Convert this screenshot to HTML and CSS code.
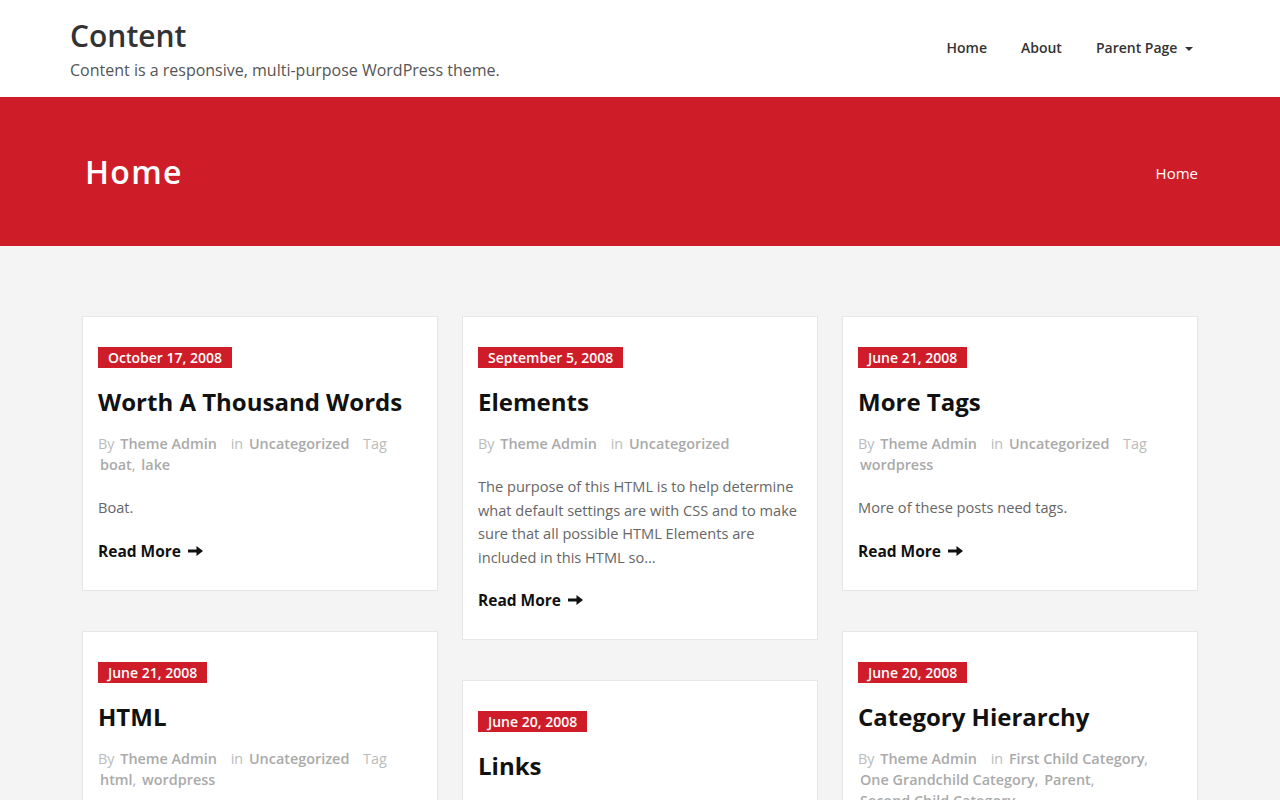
FILE: index.html
```html
<!DOCTYPE html>
<html lang="en">
<head>
  <meta charset="UTF-8">
  <meta name="viewport" content="width=device-width, initial-scale=1.0">
  <title>Content</title>
  <link rel="stylesheet" href="styles.css">
</head>
<body>

<header class="site-header">
  <div class="container header-inner">
    <div class="branding">
      <h1 class="site-title"><a href="#">Content</a></h1>
      <p class="site-description">Content is a responsive, multi-purpose WordPress theme.</p>
    </div>
    <nav class="main-nav">
      <a href="#">Home</a>
      <a href="#">About</a>
      <a href="#" class="has-children">Parent Page <span class="caret"></span></a>
    </nav>
  </div>
</header>

<section class="page-banner">
  <div class="container banner-inner">
    <h2 class="page-title">Home</h2>
    <div class="breadcrumb">Home</div>
  </div>
</section>

<main class="content-area">
  <div class="container posts">

    <div class="post-column">
      <article class="post-card">
        <span class="post-date">October 17, 2008</span>
        <h3 class="post-title">Worth A Thousand Words</h3>
        <div class="post-meta">
          <span class="label">By</span> <a href="#">Theme Admin</a>
          <span class="label in">in</span> <a href="#">Uncategorized</a>
          <span class="label in">Tag</span> <a href="#">boat</a>, <a href="#">lake</a>
        </div>
        <p class="post-excerpt">Boat.</p>
        <a href="#" class="read-more">Read More <svg width="15" height="10" viewBox="0 0 15 10"><path d="M0 3.4h8.5V0L15 5l-6.5 5V6.6H0z" fill="#111"/></svg></a>
      </article>
      <article class="post-card">
        <span class="post-date">June 21, 2008</span>
        <h3 class="post-title">HTML</h3>
        <div class="post-meta">
          <span class="label">By</span> <a href="#">Theme Admin</a>
          <span class="label in">in</span> <a href="#">Uncategorized</a>
          <span class="label in">Tag</span> <a href="#">html</a>, <a href="#">wordpress</a>
        </div>
        <p class="post-excerpt">Just some HTML.</p>
        <a href="#" class="read-more">Read More <svg width="15" height="10" viewBox="0 0 15 10"><path d="M0 3.4h8.5V0L15 5l-6.5 5V6.6H0z" fill="#111"/></svg></a>
      </article>
    </div>

    <div class="post-column">
      <article class="post-card">
        <span class="post-date">September 5, 2008</span>
        <h3 class="post-title">Elements</h3>
        <div class="post-meta">
          <span class="label">By</span> <a href="#">Theme Admin</a>
          <span class="label in">in</span> <a href="#">Uncategorized</a>
        </div>
        <p class="post-excerpt">The purpose of this HTML is to help determine what default settings are with CSS and to make sure that all possible HTML Elements are included in this HTML so…</p>
        <a href="#" class="read-more">Read More <svg width="15" height="10" viewBox="0 0 15 10"><path d="M0 3.4h8.5V0L15 5l-6.5 5V6.6H0z" fill="#111"/></svg></a>
      </article>
      <article class="post-card">
        <span class="post-date">June 20, 2008</span>
        <h3 class="post-title">Links</h3>
        <div class="post-meta">
          <span class="label">By</span> <a href="#">Theme Admin</a>
          <span class="label in">in</span> <a href="#">Uncategorized</a>
        </div>
        <p class="post-excerpt">Just a bunch of links.</p>
        <a href="#" class="read-more">Read More <svg width="15" height="10" viewBox="0 0 15 10"><path d="M0 3.4h8.5V0L15 5l-6.5 5V6.6H0z" fill="#111"/></svg></a>
      </article>
    </div>

    <div class="post-column">
      <article class="post-card">
        <span class="post-date">June 21, 2008</span>
        <h3 class="post-title">More Tags</h3>
        <div class="post-meta">
          <span class="label">By</span> <a href="#">Theme Admin</a>
          <span class="label in">in</span> <a href="#">Uncategorized</a>
          <span class="label in">Tag</span> <a href="#">wordpress</a>
        </div>
        <p class="post-excerpt">More of these posts need tags.</p>
        <a href="#" class="read-more">Read More <svg width="15" height="10" viewBox="0 0 15 10"><path d="M0 3.4h8.5V0L15 5l-6.5 5V6.6H0z" fill="#111"/></svg></a>
      </article>
      <article class="post-card">
        <span class="post-date">June 20, 2008</span>
        <h3 class="post-title">Category Hierarchy</h3>
        <div class="post-meta">
          <span class="label">By</span> <a href="#">Theme Admin</a>
          <span class="label in">in</span> <a href="#">First Child Category</a>, <a href="#">One Grandchild Category</a>, <a href="#">Parent</a>, <a href="#">Second Child Category</a>
        </div>
        <p class="post-excerpt">This post is in several categories.</p>
        <a href="#" class="read-more">Read More <svg width="15" height="10" viewBox="0 0 15 10"><path d="M0 3.4h8.5V0L15 5l-6.5 5V6.6H0z" fill="#111"/></svg></a>
      </article>
    </div>

  </div>
</main>

</body>
</html>
```

FILE: styles.css
```css
body {
  margin: 0;
  font-family: "Open Sans", "Liberation Sans", sans-serif;
  background: #f4f4f4;
  color: #666;
}
a {
  text-decoration: none;
  color: inherit;
}
.container {
  width: 1140px;
  margin: 0 auto;
}

/* header */
.site-header {
  background: #fff;
  height: 97px;
}
.header-inner {
  display: flex;
  justify-content: space-between;
  align-items: center;
  height: 100%;
}
.site-title {
  margin: 0;
  font-size: 30px;
  font-weight: 600;
  line-height: 40px;
  color: #333;
}
.site-description {
  margin: 3px 0 0;
  font-size: 16px;
  line-height: 22px;
  color: #555;
}
.main-nav {
  display: flex;
  margin-bottom: 2px;
}
.main-nav a {
  padding: 0 17px;
  font-size: 14px;
  font-weight: 600;
  color: #333;
  line-height: 20px;
}
.caret {
  display: inline-block;
  width: 0;
  height: 0;
  margin-left: 4px;
  vertical-align: middle;
  border-top: 4px solid #333;
  border-left: 4px solid transparent;
  border-right: 4px solid transparent;
}

/* banner */
.page-banner {
  background: #ce1d28;
  height: 149px;
}
.banner-inner {
  display: flex;
  justify-content: space-between;
  align-items: center;
  height: 100%;
  padding: 2px 12px 0 15px;
  box-sizing: border-box;
}
.page-title {
  margin: 0 0 2px;
  font-size: 32px;
  font-weight: 600;
  letter-spacing: 1.3px;
  color: #fff;
}
.breadcrumb {
  font-size: 15px;
  color: #fff;
}

/* posts */
.content-area {
  padding: 70px 0 40px;
}
.posts {
  display: flex;
  gap: 24px;
  padding: 0 12px;
  box-sizing: border-box;
  align-items: flex-start;
}
.post-column {
  flex: 1;
  display: flex;
  flex-direction: column;
  gap: 40px;
}
.post-card {
  background: #fff;
  border: 1px solid #e6e6e6;
  padding: 29px 15px 28px;
}
.post-date {
  display: inline-block;
  background: #ce1d28;
  color: #fff;
  font-size: 14px;
  font-weight: 600;
  line-height: 21px;
  padding: 0 10px;
}
.post-title {
  margin: 18px 0 15px;
  font-size: 24px;
  font-weight: 700;
  line-height: 32px;
  color: #111;
}
.post-meta {
  font-size: 14.4px;
  line-height: 21px;
  color: #aaa;
}
.post-meta a {
  font-weight: 600;
  margin-left: 2px;
  white-space: nowrap;
}
.post-meta .label {
  color: #bbb;
}
.post-meta .in {
  margin-left: 10px;
}
.post-excerpt {
  margin: 21px 0 20px;
  font-size: 14.6px;
  line-height: 23.5px;
  color: #666;
}
.read-more {
  display: inline-flex;
  align-items: center;
  gap: 7px;
  font-size: 15.5px;
  font-weight: 700;
  line-height: 22px;
  color: #111;
}
```
